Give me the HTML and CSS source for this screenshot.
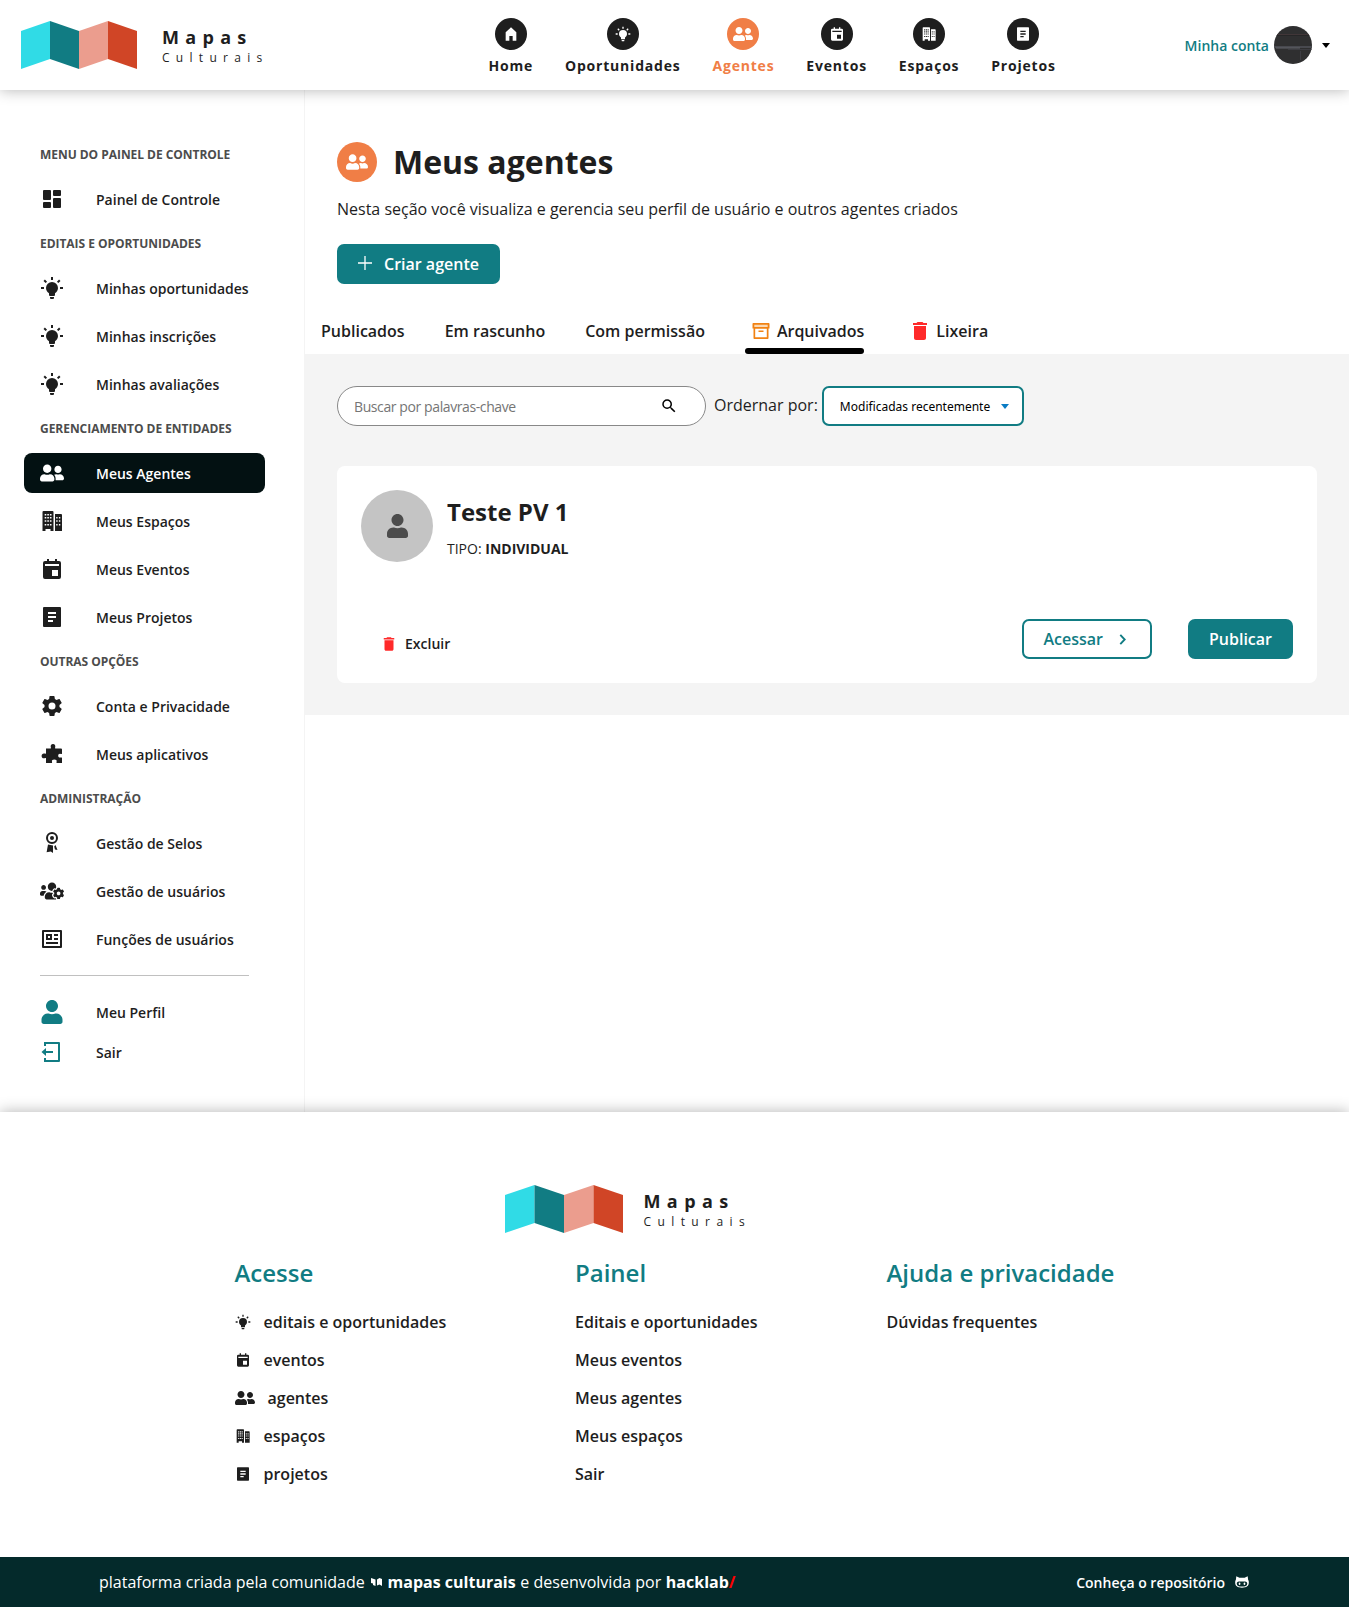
FILE: index.html
```html
<!DOCTYPE html>
<html lang="pt-BR">
<head>
<meta charset="utf-8">
<title>Meus agentes - Mapas Culturais</title>
<link rel="stylesheet" href="styles.css">
</head>
<body>
<svg class="sprite" aria-hidden="true">
  <symbol id="i-home" viewBox="0 0 24 24"><path d="M12 2 4 9.5V22h5.5v-7h5v7H20V9.500z"/></symbol>
  <symbol id="i-bulb" viewBox="0 0 24 24"><path d="M20 11h3v2h-3v-2M1 11h3v2H1v-2M13 1v3h-2V1h2M4.920 3.500l2.130 2.140-1.420 1.410L3.500 4.930 4.920 3.500m12.030 2.130l2.120-2.130 1.430 1.430-2.130 2.120-1.420-1.420M12 6a6 6 0 0 1 6 6c0 2.220-1.210 4.160-3 5.200V19a1 1 0 0 1-1 1h-4a1 1 0 0 1-1-1v-1.800c-1.790-1.040-3-2.980-3-5.200a6 6 0 0 1 6-6m2 15v1a1 1 0 0 1-1 1h-2a1 1 0 0 1-1-1v-1h4"/></symbol>
  <symbol id="i-agents" viewBox="0 0 640 512"><path d="M192 256c61.900 0 112-50.100 112-112S253.900 32 192 32 80 82.100 80 144s50.100 112 112 112zm76.800 32h-8.300c-20.800 10-43.900 16-68.500 16s-47.600-6-68.500-16h-8.300C51.600 288 0 339.600 0 403.200V432c0 26.500 21.500 48 48 48h288c26.500 0 48-21.500 48-48v-28.800c0-63.600-51.600-115.200-115.200-115.200zM480 256c53 0 96-43 96-96s-43-96-96-96-96 43-96 96 43 96 96 96zm48 32h-3.800c-13.900 4.800-28.600 8-44.200 8s-30.300-3.200-44.200-8H432c-20.400 0-39.200 5.900-55.700 15.400 24.400 26.300 39.700 61.200 39.700 99.800v38.400c0 2.200-.5 4.300-.6 6.400H592c26.500 0 48-21.500 48-48 0-61.900-50.100-112-112-112z"/></symbol>
  <symbol id="i-event" viewBox="0 0 24 24"><path fill-rule="evenodd" d="M7 2h2v2h6V2h2v2h2a2 2 0 0 1 2 2v14a2 2 0 0 1-2 2H5a2 2 0 0 1-2-2V6a2 2 0 0 1 2-2h2zM5 7v2h14V7zM12 13v6h6v-6z"/></symbol>
  <symbol id="i-space" viewBox="0 0 24 24"><path fill-rule="evenodd" d="M3.500 2h9a1 1 0 0 1 1 1v19h-3v-2h-5v2h-3V3a1 1 0 0 1 1-1zM4.700 5v1.600h1.600V5zm2.600 0v1.600h1.600V5zm2.600 0v1.600h1.600V5zM4.700 8v1.600h1.600V8zm2.600 0v1.600h1.600V8zm2.600 0v1.600h1.600V8zM4.700 11.200v1.600h1.600v-1.600zm2.600 0v1.600h1.600v-1.600zm2.600 0v1.600h1.600v-1.600zM4.700 15v1.600h1.600V15zm2.600 0v1.600h1.600V15zm2.600 0v1.600h1.600V15zM15 5h6a1 1 0 0 1 1 1v16h-7zM16.200 8v1.600h1.400V8zm2.700 0v1.600h1.400V8zm-2.700 3.200v1.600h1.400v-1.600zm2.700 0v1.600h1.400v-1.600zM16.200 15v1.600h1.400V15zm2.700 0v1.600h1.400V15z"/></symbol>
  <symbol id="i-project" viewBox="0 0 24 24"><path fill-rule="evenodd" d="M4 2h16a1 1 0 0 1 1 1v18a1 1 0 0 1-1 1H4a1 1 0 0 1-1-1V3a1 1 0 0 1 1-1zM8 7v2h8V7zm0 4v2h8v-2zm0 4v2h5v-2z"/></symbol>
  <symbol id="i-dash" viewBox="0 0 24 24"><rect x="3" y="3" width="8" height="10" rx="1"/><rect x="3" y="15" width="8" height="6" rx="1"/><rect x="13" y="3" width="8" height="6" rx="1"/><rect x="13" y="11" width="8" height="10" rx="1"/></symbol>
  <symbol id="i-cog" viewBox="0 0 24 24"><path d="M12 15.500A3.500 3.500 0 0 1 8.500 12 3.500 3.500 0 0 1 12 8.500a3.500 3.500 0 0 1 3.500 3.500 3.500 3.500 0 0 1-3.500 3.500m7.430-2.530c.04-.32.07-.64.07-.97s-.03-.66-.07-1l2.110-1.630c.19-.15.24-.42.12-.64l-2-3.460c-.12-.22-.39-.31-.61-.22l-2.490 1c-.52-.39-1.060-.73-1.690-.98l-.37-2.650A.506.506 0 0 0 14 2h-4c-.25 0-.46.18-.5.42l-.37 2.650c-.63.25-1.170.59-1.690.98l-2.490-1c-.22-.09-.49 0-.61.22l-2 3.460c-.13.22-.07.49.12.64L4.570 11c-.04.34-.07.67-.07 1s.03.65.07.97l-2.110 1.660c-.19.15-.25.42-.12.64l2 3.460c.12.22.39.3.61.22l2.490-1.010c.52.4 1.060.74 1.690.99l.37 2.650c.04.24.25.42.5.42h4c.25 0 .46-.18.5-.42l.37-2.650c.63-.26 1.170-.59 1.690-.99l2.490 1.010c.22.08.49 0 .61-.22l2-3.460c.12-.22.07-.49-.12-.64z"/></symbol>
  <symbol id="i-puzzle" viewBox="0 0 24 24"><path d="M6 6.500h4.600c.5 0 .4-.6.200-1.200C10.300 3.300 11.200 2 13 2s2.700 1.300 2.200 3.300c-.2.6-.3 1.200.2 1.200H21a1 1 0 0 1 1 1v4c0 .6-.7.600-1.300.4-1.700-.5-2.500.6-2.500 1.800s.8 2.300 2.500 1.800c.6-.2 1.300-.2 1.300.4V21h-5c-.6 0-.6-.7-.4-1.300.5-1.500-.7-2.200-2.300-2.200s-2.800.7-2.300 2.200c.2.6.2 1.300-.4 1.300H6v-4.400c0-.6-.7-.6-1.300-.4C3 16.700 1.600 15.600 1.600 13.900S3 11.100 4.700 11.600c.6.2 1.300.2 1.300-.4z"/></symbol>
  <symbol id="i-seal" viewBox="0 0 24 24"><path fill-rule="evenodd" d="M12 1a6 6 0 1 0 0 12 6 6 0 0 0 0-12zm0 2a4 4 0 1 1 0 8 4 4 0 0 1 0-8z"/><circle cx="12" cy="7" r="2"/><path d="m8 13.500 5 1.100V22l-2.200-1.500-4.200.8zM15.500 14l2 5-2.500-.6-.8-2.900z"/></symbol>
  <symbol id="i-usercog" viewBox="0 0 640 512"><path d="M610.500 341.300c2.600-14.100 2.600-28.500 0-42.600l25.800-14.900c3-1.700 4.300-5.200 3.300-8.500-6.700-21.600-18.200-41.200-33.200-57.400-2.300-2.500-6-3.100-9-1.400l-25.800 14.900c-10.900-9.300-23.400-16.500-36.900-21.300v-29.800c0-3.400-2.400-6.400-5.700-7.100-22.300-5-45-4.800-66.200 0-3.300.7-5.700 3.700-5.700 7.100v29.800c-13.500 4.800-26 12-36.900 21.300l-25.800-14.900c-2.900-1.700-6.700-1.100-9 1.400-15 16.200-26.500 35.800-33.200 57.400-1 3.300.4 6.800 3.300 8.500l25.800 14.900c-2.600 14.100-2.600 28.500 0 42.600l-25.800 14.900c-3 1.700-4.300 5.200-3.300 8.500 6.700 21.600 18.200 41.100 33.200 57.400 2.300 2.500 6 3.100 9 1.400l25.800-14.900c10.900 9.300 23.400 16.500 36.900 21.300v29.800c0 3.400 2.400 6.400 5.700 7.100 22.300 5 45 4.800 66.200 0 3.300-.7 5.700-3.700 5.700-7.100v-29.800c13.500-4.800 26-12 36.900-21.300l25.800 14.900c2.900 1.700 6.700 1.100 9-1.400 15-16.200 26.500-35.800 33.200-57.400 1-3.300-.4-6.800-3.300-8.500l-25.800-14.900zM496 368.500c-26.800 0-48.500-21.800-48.500-48.500s21.800-48.500 48.500-48.500 48.500 21.800 48.500 48.500-21.700 48.500-48.500 48.500zM96 224c35.300 0 64-28.700 64-64s-28.700-64-64-64-64 28.700-64 64 28.700 64 64 64zm224 32c1.900 0 3.700-.5 5.600-.6 8.300-21.700 20.500-42.100 36.300-59.200 7.400-8 17.900-12.600 28.900-12.600 6.900 0 13.700 1.800 19.600 5.300l7.900 4.600c.8-.5 1.600-.9 2.400-1.400 7-14.600 11.200-30.800 11.200-48 0-61.900-50.100-112-112-112S208 82.100 208 144c0 61.900 50.100 112 112 112zm105.200 194.500c-2.300-1.200-4.600-2.600-6.800-3.900-8.200 4.800-15.300 9.800-27.500 9.800-10.900 0-21.400-4.600-28.900-12.600-18.300-19.800-32.300-43.900-40.200-69.600-10.700-34.500 24.900-49.700 25.800-50.300-.1-2.600-.1-5.200 0-7.800l-7.900-4.600c-3.800-2.200-7-5-9.800-8.100-3.300.2-6.500.6-9.800.6-24.600 0-47.600-6-68.500-16h-8.300C179.600 288 128 339.600 128 403.200V432c0 26.500 21.500 48 48 48h255.400c-3.700-6-6.200-12.800-6.200-20.300v-9.200zM173.100 274.600C161.500 263.100 145.600 256 128 256H64c-35.300 0-64 28.700-64 64v32c0 17.700 14.300 32 32 32h65.900c6.300-47.400 34.900-87.300 75.200-109.400z"/></symbol>
  <symbol id="i-roles" viewBox="0 0 24 24"><path fill-rule="evenodd" d="M3 3h18a1 1 0 0 1 1 1v16a1 1 0 0 1-1 1H3a1 1 0 0 1-1-1V4a1 1 0 0 1 1-1zm1 2v14h16V5zM6 7h6v6H6zm2 2v2h2V9zM14 7h4v2h-4zm0 4h4v2h-4zM6 15h12v2H6z"/></symbol>
  <symbol id="i-user" viewBox="0 0 448 512"><path d="M224 256c70.700 0 128-57.300 128-128S294.700 0 224 0 96 57.300 96 128s57.300 128 128 128zm89.600 32h-16.700c-22.200 10.200-46.900 16-72.900 16s-50.600-5.800-72.900-16h-16.700C60.200 288 0 348.200 0 422.400V464c0 26.500 21.500 48 48 48h352c26.500 0 48-21.500 48-48v-41.600c0-74.200-60.200-134.400-134.400-134.400z"/></symbol>
  <symbol id="i-exit" viewBox="0 0 24 24"><path d="M4 2h15a1 1 0 0 1 1 1v18a1 1 0 0 1-1 1H4v-4h2v2h12V4H6v2H4zM1.500 12 6 8v3h7v2H6v3z"/></symbol>
  <symbol id="i-archive" viewBox="0 0 24 24"><path fill="#fbd9b4" d="M5 5h14v4H5z"/><path fill-rule="evenodd" d="M4.500 4h15c.6 0 1 .4 1 1v4.500h-1V19c0 .6-.4 1-1 1h-13c-.6 0-1-.4-1-1V9.500h-1V5c0-.6.400-1 1-1zM5.300 5.700v2.400h13.400V5.700zM6.200 9.700v8.600h11.600V9.700zM9.500 11.500h5v1.600h-5z"/></symbol>
  <symbol id="i-trash" viewBox="0 0 24 24"><path d="M6 19c0 1.100.9 2 2 2h8c1.100 0 2-.9 2-2V7H6v12zM19 4h-3.500l-1-1h-5l-1 1H5v2h14V4z"/></symbol>
  <symbol id="i-search" viewBox="0 0 24 24"><path d="M15.500 14h-.79l-.28-.27A6.471 6.471 0 0 0 16 9.500 6.500 6.500 0 1 0 9.500 16c1.610 0 3.090-.59 4.230-1.570l.27.28v.79l5 4.990L20.490 19l-4.990-5zm-6 0C7.010 14 5 11.990 5 9.500S7.010 5 9.500 5 14 7.010 14 9.500 11.990 14 9.500 14z"/></symbol>
  <symbol id="i-logo" viewBox="0 0 116 48" preserveAspectRatio="none"><path fill="#30dbe6" d="M0 10 29 0v38L0 48z"/><path fill="#117c83" d="M29 0l29 10v38L29 38z"/><path fill="#eb9d8e" d="M58 10 87 0v38L58 48z"/><path fill="#d04526" d="M87 0l29 10v38L87 38z"/></symbol>
  <symbol id="i-cat" viewBox="0 0 16 16"><path fill-rule="evenodd" d="M1.500 1.500 5 3h6l3.500-1.500.5 4c.7 1 .8 2 .8 3.200 0 4-2.500 5.800-7.800 5.800S.2 12.700.2 8.700c0-1.200.1-2.200.8-3.200zM4.500 7.500C2.700 7.500 2 8.600 2 10c0 2.500 2 3.200 6 3.200s6-.7 6-3.200c0-1.400-.7-2.500-2.500-2.500z"/><ellipse cx="5.200" cy="10" rx="1" ry="1.500"/><ellipse cx="10.800" cy="10" rx="1" ry="1.500"/></symbol>
</svg>

<header class="topbar">
  <a class="logo">
    <svg class="logo-mark"><use href="#i-logo"/></svg>
    <span class="logo-text"><b>Mapas</b><span>Culturais</span></span>
  </a>
  <nav class="nav">
    <a><i class="disc"><svg class="s16"><use href="#i-home"/></svg></i>Home</a>
    <a><i class="disc"><svg class="s16"><use href="#i-bulb"/></svg></i>Oportunidades</a>
    <a class="current"><i class="disc"><svg class="s20"><use href="#i-agents"/></svg></i>Agentes</a>
    <a><i class="disc"><svg class="s16"><use href="#i-event"/></svg></i>Eventos</a>
    <a><i class="disc"><svg class="s16"><use href="#i-space"/></svg></i>Espaços</a>
    <a><i class="disc"><svg class="s16"><use href="#i-project"/></svg></i>Projetos</a>
  </nav>
  <div class="account">Minha conta
    <svg class="photo" viewBox="0 0 38 38"><clipPath id="round"><circle cx="19" cy="19" r="19"/></clipPath><g clip-path="url(#round)"><path fill="#2f2f30" d="M0 0h38v38H0z"/><path fill="#413638" d="M0 8h38v1H0z"/><path fill="#262627" d="M0 9h38v1H0z"/><path fill="#48494f" d="M0 20h38v2H0z"/><path fill="#606269" d="M2 21.500h24v1H2z"/><path fill="#3d3d42" d="M14 23h24v1H14zM26 25h1v9h-1z"/></g></svg>
    <span class="caret"></span>
  </div>
</header>

<div class="body">
  <aside class="side">
    <h4>Menu do painel de controle</h4>
    <a><svg><use href="#i-dash"/></svg>Painel de Controle</a>
    <h4>Editais e oportunidades</h4>
    <a><svg><use href="#i-bulb"/></svg>Minhas oportunidades</a>
    <a><svg><use href="#i-bulb"/></svg>Minhas inscrições</a>
    <a><svg><use href="#i-bulb"/></svg>Minhas avaliações</a>
    <h4>Gerenciamento de entidades</h4>
    <a class="active"><svg><use href="#i-agents"/></svg>Meus Agentes</a>
    <a><svg><use href="#i-space"/></svg>Meus Espaços</a>
    <a><svg><use href="#i-event"/></svg>Meus Eventos</a>
    <a><svg><use href="#i-project"/></svg>Meus Projetos</a>
    <h4>Outras opções</h4>
    <a><svg><use href="#i-cog"/></svg>Conta e Privacidade</a>
    <a><svg><use href="#i-puzzle"/></svg>Meus aplicativos</a>
    <h4>Administração</h4>
    <a><svg><use href="#i-seal"/></svg>Gestão de Selos</a>
    <a><svg><use href="#i-usercog"/></svg>Gestão de usuários</a>
    <a><svg><use href="#i-roles"/></svg>Funções de usuários</a>
    <div class="own">
      <a><svg><use href="#i-user"/></svg>Meu Perfil</a>
      <a><svg><use href="#i-exit"/></svg>Sair</a>
    </div>
  </aside>

  <main class="main">
    <section class="intro">
      <div class="title"><i class="disc big"><svg><use href="#i-agents"/></svg></i><h1>Meus agentes</h1></div>
      <p>Nesta seção você visualiza e gerencia seu perfil de usuário e outros agentes criados</p>
      <button class="btn create"><svg viewBox="0 0 14 14"><path d="M7 0v14M0 7h14" stroke="#fff" stroke-width="1.300"/></svg>Criar agente</button>
    </section>
    <div class="tabs">
      <a>Publicados</a><a>Em rascunho</a><a>Com permissão</a>
      <a class="on"><svg class="orange"><use href="#i-archive"/></svg>Arquivados</a>
      <a><svg class="red"><use href="#i-trash"/></svg>Lixeira</a>
    </div>
    <section class="panel">
      <div class="filters">
        <div class="search"><span>Buscar por palavras-chave</span><svg><use href="#i-search"/></svg></div>
        <span class="order">Ordernar por:</span>
        <div class="select"><span>Modificadas recentemente</span><i class="caret blue"></i></div>
      </div>
      <article class="card">
        <div class="who">
          <i class="avatar"><svg><use href="#i-user"/></svg></i>
          <div><h2>Teste PV 1</h2><p>TIPO: <b>INDIVIDUAL</b></p></div>
        </div>
        <div class="actions">
          <a class="del"><svg class="red"><use href="#i-trash"/></svg>Excluir</a>
          <a class="btn ghost">Acessar<svg viewBox="0 0 6 10"><path d="M1 .7 5 5 1 9.300" fill="none" stroke="currentColor" stroke-width="1.700"/></svg></a>
          <a class="btn">Publicar</a>
        </div>
      </article>
    </section>
  </main>
</div>

<footer class="foot">
  <a class="logo">
    <svg class="logo-mark"><use href="#i-logo"/></svg>
    <span class="logo-text"><b>Mapas</b><span>Culturais</span></span>
  </a>
  <div class="cols">
    <div><h3>Acesse</h3>
      <a><svg class="s16"><use href="#i-bulb"/></svg>editais e oportunidades</a>
      <a><svg class="s16"><use href="#i-event"/></svg>eventos</a>
      <a><svg class="s20"><use href="#i-agents"/></svg>agentes</a>
      <a><svg class="s16"><use href="#i-space"/></svg>espaços</a>
      <a><svg class="s16"><use href="#i-project"/></svg>projetos</a>
    </div>
    <div><h3>Painel</h3>
      <a>Editais e oportunidades</a><a>Meus eventos</a><a>Meus agentes</a><a>Meus espaços</a><a>Sair</a>
    </div>
    <div><h3>Ajuda e privacidade</h3><a>Dúvidas frequentes</a></div>
  </div>
</footer>
<div class="credits">
  <span>plataforma criada pela comunidade <svg class="mini" viewBox="0 0 11 8"><path d="M0 0 4.500 1.500V8L2 7V5.500L0 5zM6 1.500 8.500 0 11 1v7L8.500 6.500 6 7.500z"/></svg> <b>mapas culturais</b> e desenvolvida por <b>hacklab<em>/</em></b></span>
  <span class="repo">Conheça o repositório<svg><use href="#i-cat"/></svg></span>
</div>
</body>
</html>
```
FILE: styles.css
```css
* { box-sizing: border-box; margin: 0; padding: 0; }
body { font-family: "Open Sans", sans-serif; color: #1e1e1e; background: #fff; font-size: 16px; width: 1349px; }
svg { fill: currentColor; flex: none; display: block; }
.sprite { position: absolute; width: 0; height: 0; }
.s16 { width: 16px; height: 16px; }
.s20 { width: 20px; height: 16px; }

.topbar { position: relative; z-index: 2; height: 90px; background: #fff; display: grid; grid-template-columns: 467.500px 1fr auto; padding: 0 19px 0 21px; box-shadow: 0 0 14px rgba(0, 0, 0, .3); }
.logo { display: flex; align-items: center; }
.logo-mark { width: 116px; height: 48px; }
.logo-text { display: flex; flex-direction: column; margin: 5px 0 0 25px; line-height: 20px; letter-spacing: 6.300px; }
.logo-text b { font-size: 18px; }
.logo-text span { font-size: 12px; line-height: 21px; }
.nav { display: flex; gap: 31.900px; padding-top: 18px; }
.nav a { display: flex; flex-direction: column; align-items: center; font-size: 14px; font-weight: 700; letter-spacing: .8px; line-height: 20px; gap: 6px; }
.nav .current { color: #f07e46; }
.disc { width: 32px; height: 32px; border-radius: 50%; background: #1e1e1e; color: #fff; display: flex; align-items: center; justify-content: center; }
.current .disc, .big { background: #f07e46; }
.big { width: 40px; height: 40px; }
.big svg { width: 22px; height: 18px; }
.account { display: flex; align-items: center; color: #117c83; font-size: 14px; font-weight: 600; }
.photo { width: 38px; height: 38px; margin: 0 10px 0 5px; }
.caret { border: 4px solid transparent; border-top: 5px solid #000; border-bottom: 0; }

.body { display: flex; height: 1022px; }
.side { display: flex; flex-direction: column; width: 304px; padding: 44px 39px 0 24px; }
.side h4 { height: 41px; line-height: 41px; padding-left: 16px; font-size: 12px; font-weight: 700; letter-spacing: -.04px; text-transform: uppercase; color: #4c4c4c; white-space: nowrap; }
.side a { display: flex; align-items: center; height: 40px; margin: 4px 0; padding: 0 16px; gap: 32px; border-radius: 8px; font-size: 14px; font-weight: 600; white-space: nowrap; }
.side svg { width: 24px; height: 24px; }
.side .active { background: #031112; color: #fff; }
.own { margin: 12px 16px 0; border-top: 1px solid #c0c0c0; padding-top: 16px; }
.own a { margin: 0; padding: 0; }
.own svg { color: #117c83; }

.main { flex: 1; border-left: 1px solid #f4f4f4; }
.intro { padding: 52px 32px 0; }
.title { display: flex; align-items: center; gap: 16px; height: 40px; }
h1 { font-size: 32px; line-height: 40px; }
.intro p { line-height: 24px; margin: 15px 0 23px; }
.btn { display: flex; align-items: center; height: 40px; border: 0; border-radius: 7px; background: #117c83; color: #fff; padding: 0 21px; font: 600 16px "Open Sans", sans-serif; }
.create svg { width: 14px; height: 14px; margin: 0 12px 2px 0; }
.tabs { display: flex; gap: 40px; height: 42px; margin: 28px 0 0 16px; font-weight: 600; }
.tabs a { display: flex; height: 42px; line-height: 38px; }
.tabs svg { width: 24px; height: 24px; margin: 7px 4px 0; }
.tabs .on { position: relative; }
.tabs .on::after { content: ""; position: absolute; left: 0; right: 0; bottom: 0; height: 6px; border-radius: 3px; background: #000; }
.orange { color: #f18213; }
.red { color: #ff2a2a; }
.panel { background: #f4f4f4; padding: 32px; height: 361px; margin-left: -1px; padding-left: 33px; }
.filters { display: flex; align-items: center; height: 40px; }
.search { width: 369px; height: 40px; border: 1px solid #888; border-radius: 20px; background: #fff; display: flex; align-items: center; justify-content: space-between; padding: 0 27px 0 16px; font-size: 14px; color: #757575; letter-spacing: -.4px; }
.search svg { width: 18px; height: 18px; color: #000; }
.order { margin: -2px 4px 0 8px; }
.select { width: 202px; height: 40px; border: 2px solid #117c83; border-radius: 7px; background: #fff; color: #000; display: flex; align-items: center; justify-content: space-between; padding: 0 13px 0 16px; font: 12px "Noto Sans", sans-serif; }
.blue { border-top-color: #0a7cc4; }
.card { margin-top: 40px; height: 217px; border-radius: 8px; background: #fff; padding: 24px; display: flex; flex-direction: column; justify-content: space-between; }
.who { display: flex; gap: 14px; }
.avatar { width: 72px; height: 72px; border-radius: 50%; background: #c4c4c4; color: #4c4c4c; display: flex; align-items: center; justify-content: center; }
.avatar svg { width: 21px; height: 24px; }
h2 { font-size: 24px; line-height: 32px; margin-top: 6px; }
.who p { font-size: 14px; line-height: 20px; margin-top: 11px; }
.actions { display: flex; align-items: center; }
.del { display: flex; align-items: center; margin: 9px auto 0 19px; gap: 7px; font-size: 14px; font-weight: 600; }
.del svg { width: 18px; height: 18px; }
.ghost { background: #fff; color: #117c83; border: 2px solid #117c83; padding: 0 24px 0 19px; margin-right: 36px; }
.ghost svg { width: 7px; height: 11px; margin-left: 16px; }

.foot { position: relative; z-index: 2; height: 445px; background: #fff; padding: 73px 0 0 234.500px; box-shadow: 0 0 14px rgba(0, 0, 0, .3); }
.foot .logo { margin-left: 270px; }
.foot .logo-mark { width: 118px; }
.foot .logo-text { margin-left: 21px; letter-spacing: 6.400px; }
.cols { display: grid; grid-template-columns: 340.500px 311.500px auto; margin-top: 24px; font-weight: 600; }
h3 { font-size: 24px; line-height: 32px; font-weight: 600; color: #117c83; margin-bottom: 14px; }
.cols a { display: flex; align-items: center; gap: 13px; height: 38px; }
.credits { position: relative; z-index: 3; height: 50px; background: #042a2b; color: #fff; display: flex; align-items: center; justify-content: space-between; padding: 0 100px 0 99px; }
.credits em { color: #f00; font-style: normal; }
.credits b { margin: 0 .5px; }
.mini { display: inline-block; width: 11px; height: 8px; margin: 0 1px 0 2px; vertical-align: 2px; }
.repo { display: flex; align-items: center; font-size: 14px; font-weight: 600; }
.repo svg { width: 14px; height: 14px; margin-left: 10px; }
```
